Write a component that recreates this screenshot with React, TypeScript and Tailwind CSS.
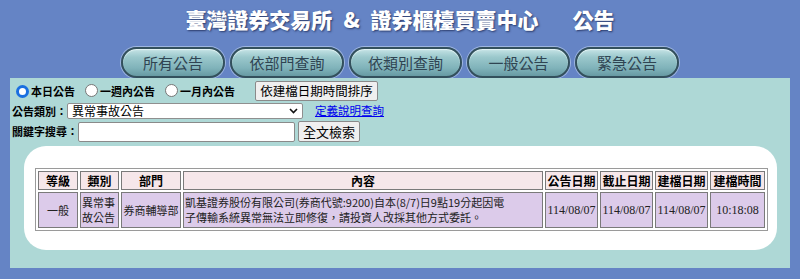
import React from "react";

const tabs: { label: string; w: string }[] = [
  { label: "所有公告", w: "w-[104px]" },
  { label: "依部門查詢", w: "w-[114px]" },
  { label: "依類別查詢", w: "w-[113px]" },
  { label: "一般公告", w: "w-[103px]" },
  { label: "緊急公告", w: "w-[104px]" },
];

function Radio({ checked }: { checked?: boolean }) {
  return (
    <span
      className={
        "inline-block w-[13px] h-[13px] rounded-full box-border shrink-0 " +
        (checked
          ? "border-[3px] border-[#1a6fe0] bg-white"
          : "border border-[#767676] bg-white")
      }
    />
  );
}

export default function App() {
  return (
    <div className="w-[800px] h-[279px] bg-[#6584c5] overflow-hidden font-['Noto_Sans_CJK_TC','Noto_Sans',sans-serif]">
      {/* Title */}
      <div className="h-[47px] pt-[6px] text-center text-white text-[21px] font-black leading-[26px] [text-shadow:1px_1px_2px_#2a3a6a]">
        臺灣證券交易所<span className="mx-[11px]">&amp;</span>證券櫃檯買賣中心
        <span className="inline-block w-[34px]" />
        公告
      </div>

      {/* Tabs */}
      <div className="flex justify-center gap-[5px] h-[31px]">
        {tabs.map((t) => (
          <div
            key={t.label}
            className={
              t.w +
              " h-[31px] rounded-full border-2 border-[#33505c] bg-[linear-gradient(to_bottom,#c6e4e6_0%,#9bc8cc_30%,#80b3ba_70%,#679aa3_100%)] shadow-[0_0_0_1px_#9fb6e0,inset_0_1px_1px_#e6f5f5] flex items-center justify-center text-[15px] leading-none text-[#2f4452]"
            }
          >
            {t.label}
          </div>
        ))}
      </div>

      {/* Main panel */}
      <div className="mx-[10px] h-[190px] bg-[#aed8d6] pt-[3px] relative">
        {/* Row 1 */}
        <div className="flex items-center h-[20px] pl-[6px] text-[11px] font-bold text-black leading-none">
          <Radio checked />
          <span className="ml-[2px]">本日公告</span>
          <span className="ml-[10px]">
            <Radio />
          </span>
          <span className="ml-[2px]">一週內公告</span>
          <span className="ml-[10px]">
            <Radio />
          </span>
          <span className="ml-[2px]">一月內公告</span>
          <button className="ml-[20px] h-[20px] w-[123px] bg-[#efefef] border border-[#8a8a8a] rounded-[2px] text-[12.5px] font-normal leading-none text-black flex items-center justify-center">
            依建檔日期時間排序
          </button>
        </div>

        {/* Row 2 */}
        <div className="flex items-center h-[16px] mt-[2px] pl-[2px] text-[11px] font-bold leading-none">
          <span className="w-[55px] whitespace-nowrap">公告類別：</span>
          <div className="w-[236px] h-[16px] bg-white border border-[#8f8f8f] rounded-[2px] flex items-center justify-between pl-[4px] pr-[4px] box-border">
            <span className="text-[12px] font-normal">異常事故公告</span>
            <svg width="9" height="6" viewBox="0 0 9 6">
              <path d="M1 1 L4.5 4.5 L8 1" fill="none" stroke="#111" strokeWidth="1.6" />
            </svg>
          </div>
          <a className="ml-[12px] text-[11.5px] font-normal text-[#0000ee] underline underline-offset-1">
            定義說明查詢
          </a>
        </div>

        {/* Row 3 */}
        <div className="flex items-center h-[21px] mt-[2px] pl-[2px] text-[11px] font-bold leading-none">
          <span className="w-[66px] whitespace-nowrap">關鍵字搜尋：</span>
          <div className="w-[217px] h-[20px] bg-white border border-[#8a8a8a] rounded-[2px] box-border" />
          <button className="ml-[3px] h-[21px] w-[62px] bg-[#efefef] border border-[#8a8a8a] rounded-[2px] text-[13px] font-normal leading-none text-black flex items-center justify-center">
            全文檢索
          </button>
        </div>

        {/* White box */}
        <div className="mt-[4px] ml-[14px] mr-[13px] h-[104px] bg-white rounded-[22px] pt-[22px] pl-[11px]">
          <table className="table-fixed w-[731px] border-separate border-spacing-[2px] border border-[#9a9a9a]">
            <colgroup>
              <col className="w-[40px]" />
              <col className="w-[39px]" />
              <col className="w-[60px]" />
              <col className="w-[360px]" />
              <col className="w-[53px]" />
              <col className="w-[53px]" />
              <col className="w-[53px]" />
              <col className="w-[55px]" />
            </colgroup>
            <thead>
              <tr>
                {["等級", "類別", "部門", "內容", "公告日期", "截止日期", "建檔日期", "建檔時間"].map((h) => (
                  <th
                    key={h}
                    className="h-[19px] p-0 bg-[#f6e7ea] border border-[#7a7a7a] text-[12px] font-bold leading-none text-black text-center whitespace-nowrap"
                  >
                    {h}
                  </th>
                ))}
              </tr>
            </thead>
            <tbody>
              <tr className="text-[11px] text-[#222] leading-[15px]">
                <td className="h-[36px] p-0 bg-[#dccbea] border border-[#7a7a7a] text-center">一般</td>
                <td className="p-0 pl-[1px] bg-[#dccbea] border border-[#7a7a7a] text-left">
                  異常事
                  <br />
                  故公告
                </td>
                <td className="p-0 bg-[#dccbea] border border-[#7a7a7a] text-center whitespace-nowrap">
                  券商輔導部
                </td>
                <td className="p-0 pl-[1px] bg-[#dccbea] border border-[#7a7a7a] text-left whitespace-nowrap">
                  凱基證券股份有限公司(券商代號:9200)自本(8/7)日9點19分起因電
                  <br />
                  子傳輸系統異常無法立即修復，請投資人改採其他方式委託。
                </td>
                {["114/08/07", "114/08/07", "114/08/07", "10:18:08"].map((d, i) => (
                  <td
                    key={i}
                    className="p-0 bg-[#dccbea] border border-[#7a7a7a] text-center font-['Liberation_Serif',serif] text-[12px] text-[#222] whitespace-nowrap"
                  >
                    {d}
                  </td>
                ))}
              </tr>
            </tbody>
          </table>
        </div>
      </div>
    </div>
  );
}
